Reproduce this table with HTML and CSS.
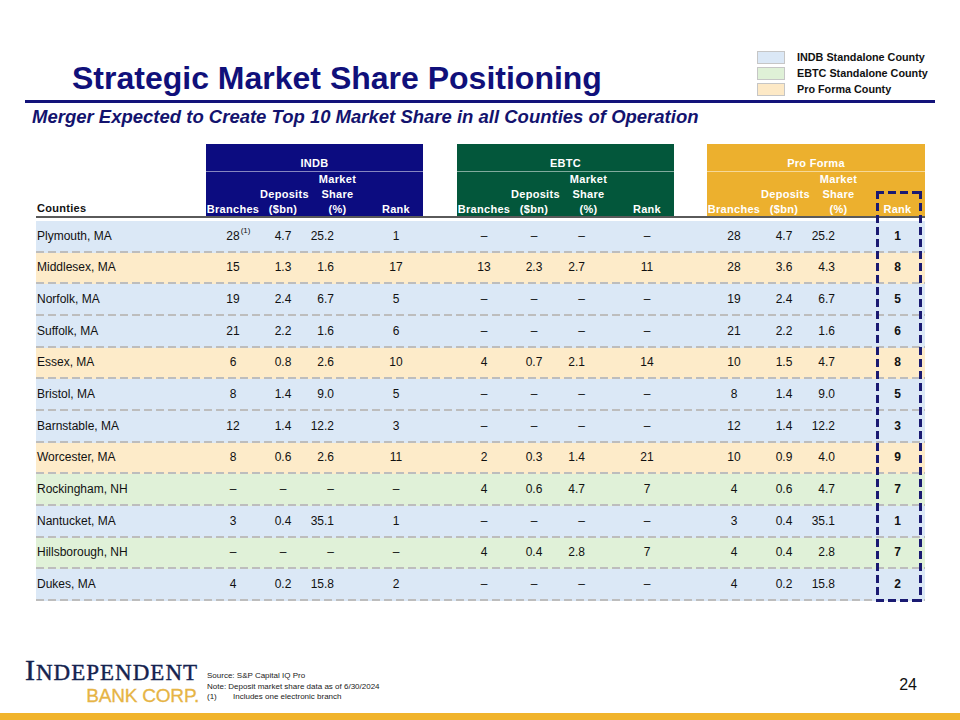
FILE: index.html
```html
<!DOCTYPE html>
<html lang="en">
<head>
<meta charset="utf-8">
<title>Strategic Market Share Positioning</title>
<link rel="stylesheet" href="styles.css">
</head>
<body>
<div class="slide">
  <div class="top">
    <h1 class="title">Strategic Market Share Positioning</h1>
    <div class="legend">
      <div class="legend-item"><span class="swatch sw-blue"></span>INDB Standalone County</div>
      <div class="legend-item"><span class="swatch sw-green"></span>EBTC Standalone County</div>
      <div class="legend-item"><span class="swatch sw-orange"></span>Pro Forma County</div>
    </div>
  </div>
  <div class="rule"></div>
  <h2 class="subtitle">Merger Expected to Create Top 10 Market Share in all Counties of Operation</h2>

  <div class="table">
    <div class="thead">
      <div class="th-county">Counties</div>
      <div class="grp grp-indb">
        <div class="grp-title">INDB</div>
        <div class="grp-cols">
          <div>Branches</div><div>Deposits<br>($bn)</div><div>Market<br>Share<br>(%)</div><div>Rank</div>
        </div>
      </div>
      <div></div>
      <div class="grp grp-ebtc">
        <div class="grp-title">EBTC</div>
        <div class="grp-cols">
          <div>Branches</div><div>Deposits<br>($bn)</div><div>Market<br>Share<br>(%)</div><div>Rank</div>
        </div>
      </div>
      <div></div>
      <div class="grp grp-pf">
        <div class="grp-title">Pro Forma</div>
        <div class="grp-cols grp-cols-pf">
          <div>Branches</div><div>Deposits<br>($bn)</div><div>Market<br>Share<br>(%)</div><div>Rank</div>
        </div>
      </div>
    </div>

    <div class="rows">
      <div class="row blue"><div class="county">Plymouth, MA</div><div><span class="num">28<sup class="fn">(1)</sup></span></div><div>4.7</div><div class="sh">25.2</div><div>1</div><div></div><div>–</div><div>–</div><div class="sh">–</div><div>–</div><div></div><div>28</div><div>4.7</div><div class="sh">25.2</div><div class="rk">1</div></div>
      <div class="row orange"><div class="county">Middlesex, MA</div><div>15</div><div>1.3</div><div class="sh">1.6</div><div>17</div><div></div><div>13</div><div>2.3</div><div class="sh">2.7</div><div>11</div><div></div><div>28</div><div>3.6</div><div class="sh">4.3</div><div class="rk">8</div></div>
      <div class="row blue"><div class="county">Norfolk, MA</div><div>19</div><div>2.4</div><div class="sh">6.7</div><div>5</div><div></div><div>–</div><div>–</div><div class="sh">–</div><div>–</div><div></div><div>19</div><div>2.4</div><div class="sh">6.7</div><div class="rk">5</div></div>
      <div class="row blue"><div class="county">Suffolk, MA</div><div>21</div><div>2.2</div><div class="sh">1.6</div><div>6</div><div></div><div>–</div><div>–</div><div class="sh">–</div><div>–</div><div></div><div>21</div><div>2.2</div><div class="sh">1.6</div><div class="rk">6</div></div>
      <div class="row orange"><div class="county">Essex, MA</div><div>6</div><div>0.8</div><div class="sh">2.6</div><div>10</div><div></div><div>4</div><div>0.7</div><div class="sh">2.1</div><div>14</div><div></div><div>10</div><div>1.5</div><div class="sh">4.7</div><div class="rk">8</div></div>
      <div class="row blue"><div class="county">Bristol, MA</div><div>8</div><div>1.4</div><div class="sh">9.0</div><div>5</div><div></div><div>–</div><div>–</div><div class="sh">–</div><div>–</div><div></div><div>8</div><div>1.4</div><div class="sh">9.0</div><div class="rk">5</div></div>
      <div class="row blue"><div class="county">Barnstable, MA</div><div>12</div><div>1.4</div><div class="sh">12.2</div><div>3</div><div></div><div>–</div><div>–</div><div class="sh">–</div><div>–</div><div></div><div>12</div><div>1.4</div><div class="sh">12.2</div><div class="rk">3</div></div>
      <div class="row orange"><div class="county">Worcester, MA</div><div>8</div><div>0.6</div><div class="sh">2.6</div><div>11</div><div></div><div>2</div><div>0.3</div><div class="sh">1.4</div><div>21</div><div></div><div>10</div><div>0.9</div><div class="sh">4.0</div><div class="rk">9</div></div>
      <div class="row green"><div class="county">Rockingham, NH</div><div>–</div><div>–</div><div class="sh">–</div><div>–</div><div></div><div>4</div><div>0.6</div><div class="sh">4.7</div><div>7</div><div></div><div>4</div><div>0.6</div><div class="sh">4.7</div><div class="rk">7</div></div>
      <div class="row blue"><div class="county">Nantucket, MA</div><div>3</div><div>0.4</div><div class="sh">35.1</div><div>1</div><div></div><div>–</div><div>–</div><div class="sh">–</div><div>–</div><div></div><div>3</div><div>0.4</div><div class="sh">35.1</div><div class="rk">1</div></div>
      <div class="row green"><div class="county">Hillsborough, NH</div><div>–</div><div>–</div><div class="sh">–</div><div>–</div><div></div><div>4</div><div>0.4</div><div class="sh">2.8</div><div>7</div><div></div><div>4</div><div>0.4</div><div class="sh">2.8</div><div class="rk">7</div></div>
      <div class="row blue"><div class="county">Dukes, MA</div><div>4</div><div>0.2</div><div class="sh">15.8</div><div>2</div><div></div><div>–</div><div>–</div><div class="sh">–</div><div>–</div><div></div><div>4</div><div>0.2</div><div class="sh">15.8</div><div class="rk">2</div></div>
    </div>
    <div class="rank-box"></div>
  </div>

  <div class="footer">
    <div class="logo">
      <div class="logo-top"><span class="logo-i">I</span>NDEPENDENT</div>
      <div class="logo-bot">BANK CORP.</div>
    </div>
    <div class="notes">
      <div>Source: S&amp;P Capital IQ Pro</div>
      <div>Note: Deposit market share data as of 6/30/2024</div>
      <div><span class="fn-label">(1)</span>Includes one electronic branch</div>
    </div>
    <div class="page-num">24</div>
  </div>
  <div class="bar"></div>
</div>
</body>
</html>
```

FILE: styles.css
```css
* {
  box-sizing: border-box;
  margin: 0;
  padding: 0;
}

body {
  margin: 0;
  background: #ffffff;
  font-family: "Liberation Sans", Arial, sans-serif;
  color: #000000;
}

.slide {
  width: 960px;
  height: 720px;
  display: flex;
  flex-direction: column;
  overflow: hidden;
  background: #ffffff;
}

/* ---------- top ---------- */
.top {
  display: flex;
  align-items: flex-start;
  height: 100px;
  padding-top: 49px;
}

.title {
  margin: 11px 0 0 72px;
  width: 685px;
  font-size: 32px;
  line-height: 36px;
  font-weight: bold;
  color: #10107a;
}

.legend {
  display: flex;
  flex-direction: column;
}

.legend-item {
  display: flex;
  align-items: center;
  gap: 12px;
  height: 16px;
  font-size: 10.8px;
  font-weight: bold;
  color: #111111;
  white-space: nowrap;
}

.swatch {
  width: 28px;
  height: 13px;
  border: 1px solid #c6c6c6;
}

.sw-blue { background: #dbe8f6; }
.sw-green { background: #dff1d7; }
.sw-orange { background: #fde9c6; }

.rule {
  height: 3px;
  margin: 0 25px;
  background: #13137a;
}

.subtitle {
  margin: 3px 0 0 32px;
  font-size: 18.5px;
  line-height: 22px;
  font-weight: bold;
  font-style: italic;
  color: #13136e;
}

/* ---------- table ---------- */
.table {
  position: relative;
  width: 889px;
  margin: 16px 0 0 36px;
}

.thead {
  display: grid;
  grid-template-columns: 170px 217px 34px 217px 33px 218px;
  border-bottom: 2px solid #5a5a5a;
}

.th-county,
.grp-cols > div,
.grp-title {
  font-size: 11px;
  font-weight: bold;
  letter-spacing: 0.3px;
  line-height: 15px;
}

.th-county {
  align-self: end;
  padding-left: 1px;
  color: #111111;
}

.grp {
  color: #ffffff;
}

.grp-indb { background: #0c0c80; }
.grp-ebtc { background: #03573b; }
.grp-pf { background: #ecb02e; }

.grp-title {
  height: 28px;
  display: flex;
  align-items: flex-end;
  justify-content: center;
  border-bottom: 1px solid rgba(255, 255, 255, 0.5);
}

.grp-cols {
  height: 44px;
  display: grid;
  grid-template-columns: 54px 46px 63px 54px;
}

.grp-cols-pf {
  grid-template-columns: 54px 46px 63px 55px;
}

.grp-cols > div {
  display: flex;
  flex-direction: column;
  justify-content: flex-end;
  text-align: center;
  white-space: nowrap;
  padding-bottom: 1px;
}

.rows {
  margin-top: 3px;
}

.row {
  display: grid;
  grid-template-columns: 170px 54px 46px 63px 54px 34px 54px 46px 63px 54px 33px 54px 46px 63px 55px;
  height: 31.67px;
  padding-bottom: 2px;
  font-size: 12px;
  color: #111111;
  background-repeat: no-repeat;
  background-position: left bottom;
  background-size: 100% 2px;
}

.row > div {
  display: flex;
  align-items: center;
  justify-content: center;
}

.row > .county {
  justify-content: flex-start;
  padding-left: 1px;
}

.row > .sh {
  justify-content: flex-end;
  padding-right: 35px;
}

.row > .rk {
  font-weight: bold;
}

.blue {
  background-color: #dbe8f6;
  background-image: repeating-linear-gradient(90deg, #bdbdbd 0 8px, transparent 8px 12px);
}

.orange {
  background-color: #fdebc9;
  background-image: repeating-linear-gradient(90deg, #bdbdbd 0 8px, transparent 8px 12px);
}

.green {
  background-color: #e0f1d8;
  background-image: repeating-linear-gradient(90deg, #bdbdbd 0 8px, transparent 8px 12px);
}

.num {
  position: relative;
}

.fn {
  position: absolute;
  left: 100%;
  top: -2px;
  font-size: 8px;
  line-height: 8px;
  padding-left: 1px;
}

.rank-box {
  position: absolute;
  left: 840px;
  top: 47px;
  width: 46px;
  height: 411px;
  background:
    repeating-linear-gradient(90deg, #1a1a72 0 8px, transparent 8px 12px) left top / 100% 3px no-repeat,
    repeating-linear-gradient(90deg, #1a1a72 0 8px, transparent 8px 12px) left bottom / 100% 3px no-repeat,
    repeating-linear-gradient(180deg, #1a1a72 0 8px, transparent 8px 12px) left top / 3px 100% no-repeat,
    repeating-linear-gradient(180deg, #1a1a72 0 8px, transparent 8px 12px) right top / 3px 100% no-repeat;
}

/* ---------- footer ---------- */
.footer {
  margin-top: auto;
  height: 62px;
  display: flex;
  align-items: flex-start;
  padding-left: 25px;
}

.logo {
  margin-top: 6px;
  width: 174px;
}

.logo-top {
  font-family: "Liberation Serif", "Times New Roman", serif;
  font-size: 23px;
  line-height: 26px;
  letter-spacing: 1px;
  color: #15234f;
  white-space: nowrap;
  -webkit-text-stroke: 0.4px #15234f;
}

.logo-i {
  font-size: 30px;
}

.logo-bot {
  text-align: right;
  font-size: 19px;
  line-height: 20px;
  letter-spacing: -0.2px;
  color: #e6b445;
  white-space: nowrap;
  -webkit-text-stroke: 0.3px #e6b445;
}

.notes {
  margin: 20px 0 0 8px;
  font-size: 8px;
  line-height: 10.7px;
  color: #222222;
}

.fn-label {
  display: inline-block;
  width: 26px;
}

.page-num {
  margin: 24px 43px 0 auto;
  font-size: 16px;
  line-height: 20px;
  color: #111111;
}

.bar {
  height: 7px;
  background: #f1b42c;
}
```
